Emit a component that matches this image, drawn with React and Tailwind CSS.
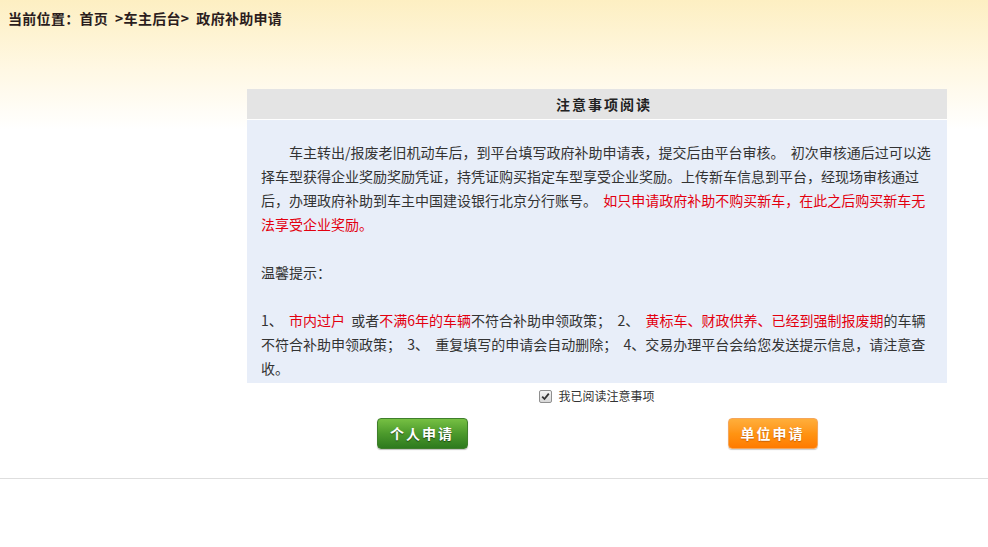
import React from "react";

const red = "text-[#e3000f]";

function Check() {
  return (
    <span className="inline-flex items-center justify-center w-[13px] h-[13px] border border-[#8f8f8f] rounded-[2px] bg-gradient-to-b from-[#f4f4f4] to-[#d8d8d8]">
      <svg width="9" height="9" viewBox="0 0 9 9">
        <path d="M1.2 4.6 L3.5 7 L7.8 1.6" fill="none" stroke="#333" strokeWidth="1.8" />
      </svg>
    </span>
  );
}

export default function App() {
  return (
    <div
      className="min-h-screen bg-[linear-gradient(to_bottom,#fdefc2_0px,#fff8e4_70px,#ffffff_130px)] text-[#333]"
      style={{ fontFamily: '"Noto Sans CJK SC", "Noto Sans", sans-serif' }}
    >
      <div className="h-[36px] leading-[36px] pl-[8px] text-[14px] font-bold text-[#2b1d1d] tracking-[0.3px]">
        当前位置：首页&nbsp;&nbsp;&gt;车主后台&gt;&nbsp;&nbsp;政府补助申请
      </div>

      <div className="ml-[247px] w-[700px] mt-[53px]">
        <div className="h-[31px] leading-[30px] bg-[#e4e4e4] border-b border-white text-center pl-[14px] text-[14px] tracking-[2px] font-bold text-[#222]">
          注意事项阅读
        </div>
        <div className="bg-[#e8eef9] px-[14px] pt-[20px] pb-[3px] text-[14px] leading-[24px] text-[#333] whitespace-nowrap">
          <p className="pl-[28px]">
            车主转出/报废老旧机动车后，到平台填写政府补助申请表，提交后由平台审核。&nbsp;&nbsp;初次审核通后过可以选
          </p>
          <p>择车型获得企业奖励奖励凭证，持凭证购买指定车型享受企业奖励。上传新车信息到平台，经现场审核通过</p>
          <p>
            后，办理政府补助到车主中国建设银行北京分行账号。&nbsp;&nbsp;
            <span className={red}>如只申请政府补助不购买新车，在此之后购买新车无</span>
          </p>
          <p className={red}>法享受企业奖励。</p>
          <p className="h-[24px]" />
          <p>温馨提示：</p>
          <p className="h-[24px]" />
          <p>
            1、&nbsp;&nbsp;<span className={red}>市内过户</span>&nbsp;&nbsp;或者<span className={red}>不满6年的车辆</span>不符合补助申领政策；&nbsp;&nbsp;2、&nbsp;&nbsp;
            <span className={red}>黄标车、财政供养、已经到强制报废期</span>的车辆
          </p>
          <p>不符合补助申领政策；&nbsp;&nbsp;3、&nbsp;&nbsp;重复填写的申请会自动删除；&nbsp;&nbsp;4、交易办理平台会给您发送提示信息，请注意查</p>
          <p>收。</p>
        </div>

        <div className="h-[26px] flex items-center justify-center gap-[6px] text-[12px] text-[#333]">
          <Check />
          <span>我已阅读注意事项</span>
        </div>

        <div className="mt-[9px] flex justify-center gap-[260px]">
          <button className="w-[91px] h-[31px] rounded-[4px] border border-[#3f7f2c] bg-gradient-to-b from-[#76c043] via-[#4c9a2c] to-[#2d7a1e] text-white text-[14px] font-bold tracking-[2px] [text-shadow:0_1px_1px_rgba(0,0,0,0.5)] shadow-[0_1px_1px_rgba(0,0,0,0.25)]">
            个人申请
          </button>
          <button className="w-[90px] h-[31px] rounded-[4px] border border-[#f5a65a] bg-gradient-to-b from-[#ffae3a] via-[#ff9412] to-[#ff7a00] text-white text-[14px] font-bold tracking-[2px] [text-shadow:0_1px_1px_rgba(150,60,0,0.5)] shadow-[0_1px_1px_rgba(0,0,0,0.2)]">
            单位申请
          </button>
        </div>
      </div>

      <div className="mt-[29px] border-t border-[#dedede]" />
    </div>
  );
}
